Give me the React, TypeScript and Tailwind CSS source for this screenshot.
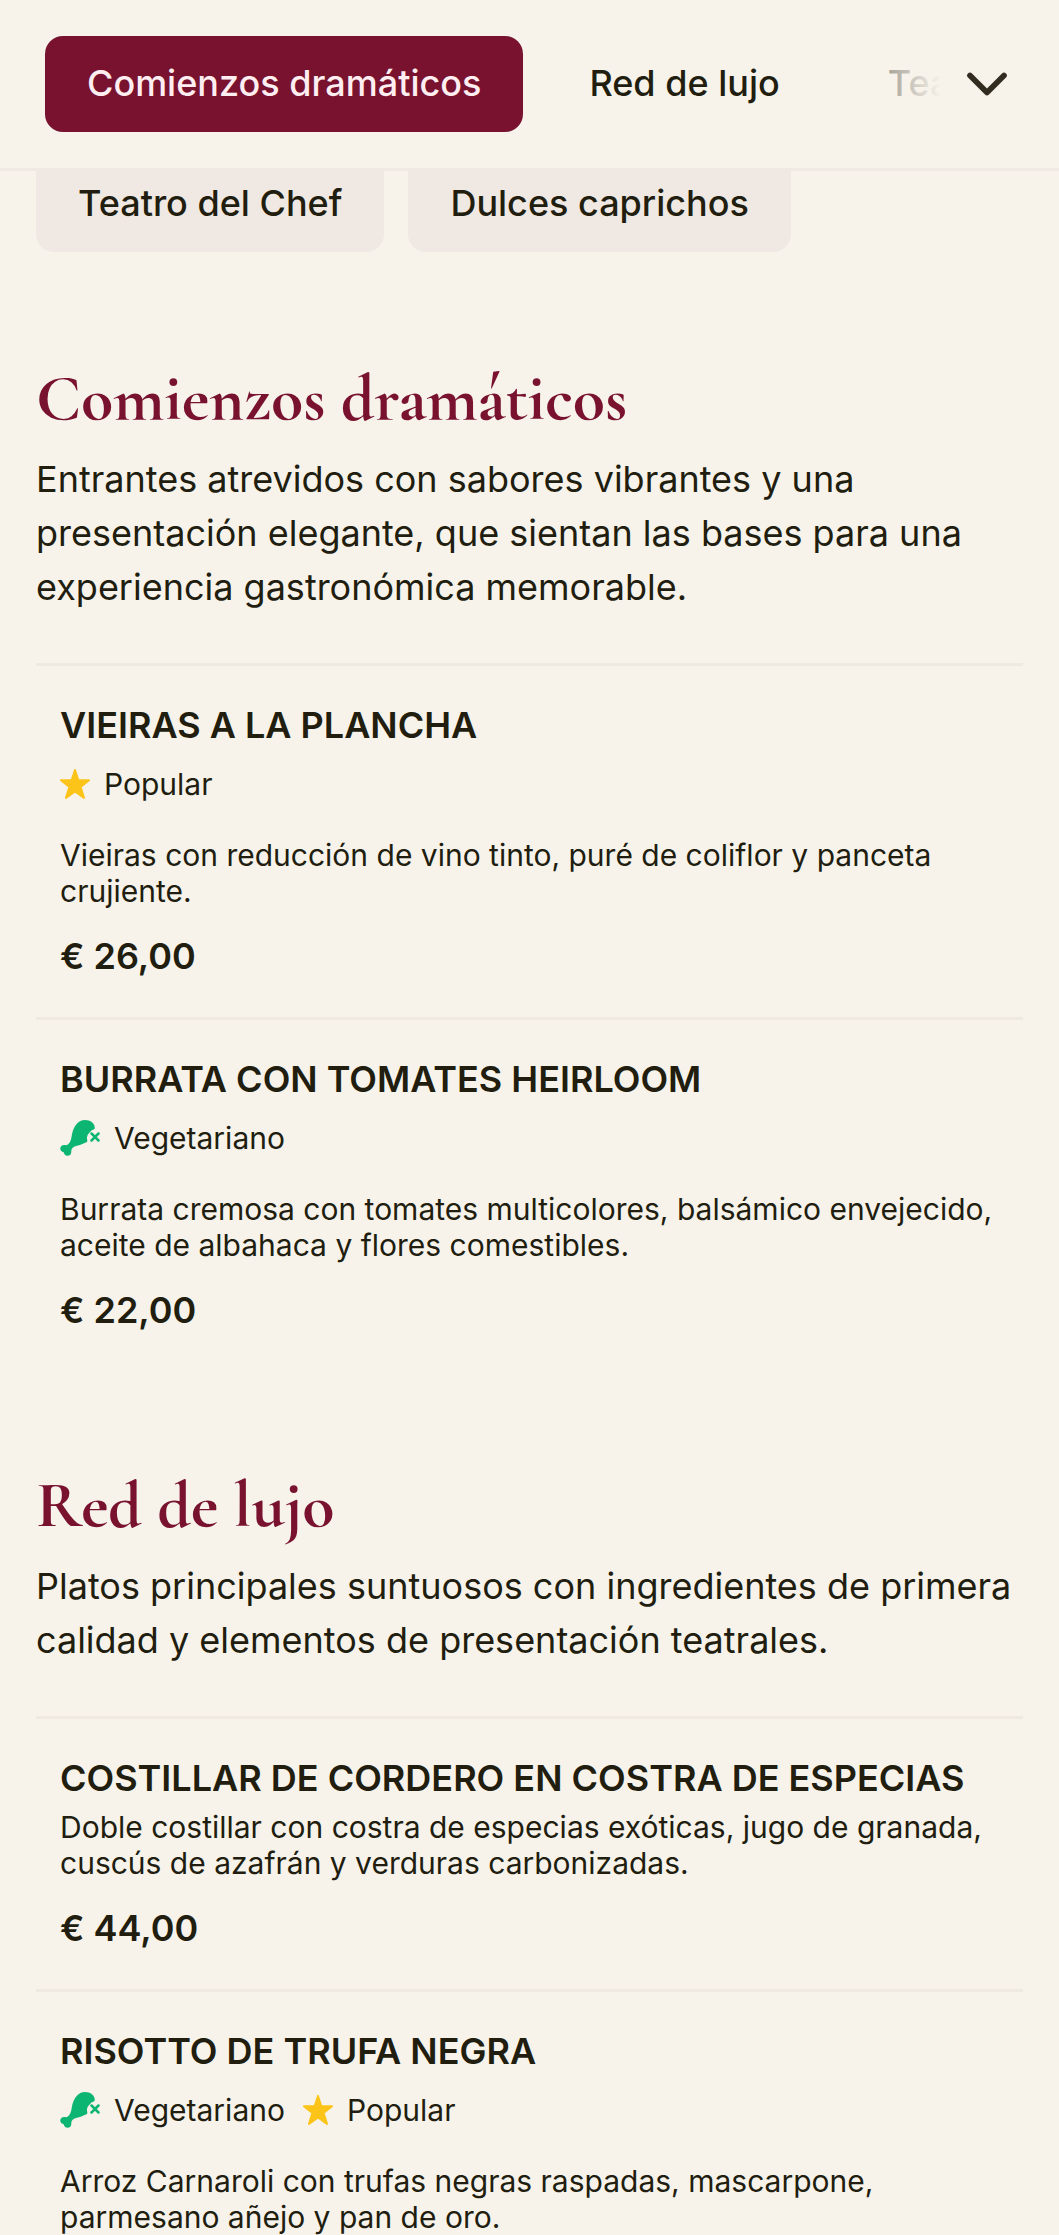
import { ChevronDown } from "lucide-react";

type Tag = "popular" | "vegetariano";

type Dish = {
  name: string;
  tags: Tag[];
  description: string;
  price: string;
};

type Category = {
  id: string;
  title: string;
  intro: string;
  dishes: Dish[];
};

const categories: Category[] = [
  {
    id: "comienzos-dramaticos",
    title: "Comienzos dramáticos",
    intro:
      "Entrantes atrevidos con sabores vibrantes y una presentación elegante, que sientan las bases para una experiencia gastronómica memorable.",
    dishes: [
      {
        name: "Vieiras a la plancha",
        tags: ["popular"],
        description:
          "Vieiras con reducción de vino tinto, puré de coliflor y panceta crujiente.",
        price: "€ 26,00",
      },
      {
        name: "Burrata con tomates heirloom",
        tags: ["vegetariano"],
        description:
          "Burrata cremosa con tomates multicolores, balsámico envejecido, aceite de albahaca y flores comestibles.",
        price: "€ 22,00",
      },
    ],
  },
  {
    id: "red-de-lujo",
    title: "Red de lujo",
    intro:
      "Platos principales suntuosos con ingredientes de primera calidad y elementos de presentación teatrales.",
    dishes: [
      {
        name: "Costillar de cordero en costra de especias",
        tags: [],
        description:
          "Doble costillar con costra de especias exóticas, jugo de granada, cuscús de azafrán y verduras carbonizadas.",
        price: "€ 44,00",
      },
      {
        name: "Risotto de trufa negra",
        tags: ["vegetariano", "popular"],
        description:
          "Arroz Carnaroli con trufas negras raspadas, mascarpone, parmesano añejo y pan de oro.",
        price: "€ 34,00",
      },
    ],
  },
];

function StarIcon() {
  return (
    <svg viewBox="0 0 30 30" className="w-[30px] h-[30px] shrink-0" fill="#fcc419" aria-hidden="true">
      <path
        d="M15 1l3.400 10.200H29l-8.400 6.700 3.400 11-9-6.500-9 6.500 3.400-11L1 11.200h10.600z"
        stroke="#fcc419"
        strokeWidth="2"
        strokeLinejoin="round"
      />
    </svg>
  );
}

function VegetarianIcon() {
  return (
    <svg viewBox="0 0 40 36" className="w-10 h-9 shrink-0" aria-hidden="true">
      <path
        fill="#0db573"
        d="M25 0C18 0 14.500 6 12.500 12C11.500 16 11.500 19 10 22C8.500 24.500 7 25.500 5 25C2 24.500 0 26.500 0.300 29C0.600 31.200 2 31.500 3.500 32C4.200 34.500 5.500 36 8 35.800C10.600 35.500 11.500 33.500 11.300 31C11.300 28.500 13 27 16 26C20 25 24 23.500 27 22C28 20 26.500 19 27 17C27.500 14 29.500 13 30.500 11.500C31.500 10 33.500 10 34.800 8.500C35 3 30.500 0 25 0Z"
      />
      <path d="M31.500 13.500l7 7M38.500 13.500l-7 7" stroke="#0db573" strokeWidth="2.500" strokeLinecap="round" />
    </svg>
  );
}

function DishTag({ tag }: { tag: Tag }) {
  return (
    <li className="flex items-center gap-[14px]">
      {tag === "popular" ? <StarIcon /> : <VegetarianIcon />}
      {tag === "popular" ? "Popular" : "Vegetariano"}
    </li>
  );
}

function DishItem({ dish }: { dish: Dish }) {
  return (
    <article className="border-t-3 border-[#efe9e2] px-6 pt-[38px] pb-10">
      <h3 className="text-[36px] leading-[42px] font-semibold uppercase">{dish.name}</h3>
      {dish.tags.length > 0 && (
        <ul className="mt-5 mb-[35px] flex flex-wrap gap-[18px] text-[30px] leading-9">
          {dish.tags.map((tag) => (
            <DishTag key={tag} tag={tag} />
          ))}
        </ul>
      )}
      <p className="mt-[10px] text-[30px] leading-9">{dish.description}</p>
      <p className="mt-[26px] text-[36px] leading-[42px] font-semibold">{dish.price}</p>
    </article>
  );
}

export default function App() {
  return (
    <div className="h-screen overflow-hidden bg-[#f7f3eb] text-[#211d0f] font-['Inter',sans-serif]">
      <header className="fixed inset-x-0 top-0 z-10 flex items-center border-b-3 border-[#f0e9e3] bg-[#f7f3eb] py-9 pr-[38px] pl-[45px]">
        <nav className="relative flex min-w-0 flex-1 gap-6 overflow-hidden text-[36px] leading-[54px] font-medium whitespace-nowrap">
          <a href="#comienzos-dramaticos" className="rounded-[18px] bg-[#79122f] px-[42px] pt-5 pb-[22px] text-[#ffeef1]">
            Comienzos dramáticos
          </a>
          <a href="#red-de-lujo" className="px-[42px] pt-5 pb-[22px]">
            Red de lujo
          </a>
          <a href="#teatro-del-chef" className="px-[42px] pt-5 pb-[22px]">
            Teatro del Chef
          </a>
          <div className="pointer-events-none absolute inset-y-0 right-0 w-[144px] bg-linear-to-r from-transparent to-[#f7f3eb]" />
        </nav>
        <button type="button" aria-label="Ver todas las categorías" className="ml-3 shrink-0">
          <ChevronDown className="w-[68px] h-[68px] text-[#322c20]" strokeWidth={2} />
        </button>
      </header>

      <main className="px-9 pt-[156px]">
        <nav className="flex flex-wrap gap-6 text-[36px] leading-[54px] font-medium">
          <a href="#teatro-del-chef" className="rounded-[18px] bg-[#f0e8e2] px-[42px] pt-5 pb-[22px]">
            Teatro del Chef
          </a>
          <a href="#dulces-caprichos" className="rounded-[18px] bg-[#f0e8e2] px-[42px] pt-5 pb-[22px]">
            Dulces caprichos
          </a>
        </nav>

        <div className="mt-[111px] flex flex-col gap-[99px]">
          {categories.map((category) => (
            <section key={category.id} id={category.id}>
              <h2 className="text-[66px] leading-[70px] font-bold text-[#79122f] font-['Cormorant_Garamond','Liberation_Serif',serif]">
                {category.title}
              </h2>
              <p className="mt-[19px] mb-[49px] text-[36px] leading-[54px]">{category.intro}</p>
              {category.dishes.map((dish) => (
                <DishItem key={dish.name} dish={dish} />
              ))}
            </section>
          ))}
        </div>
      </main>
    </div>
  );
}
